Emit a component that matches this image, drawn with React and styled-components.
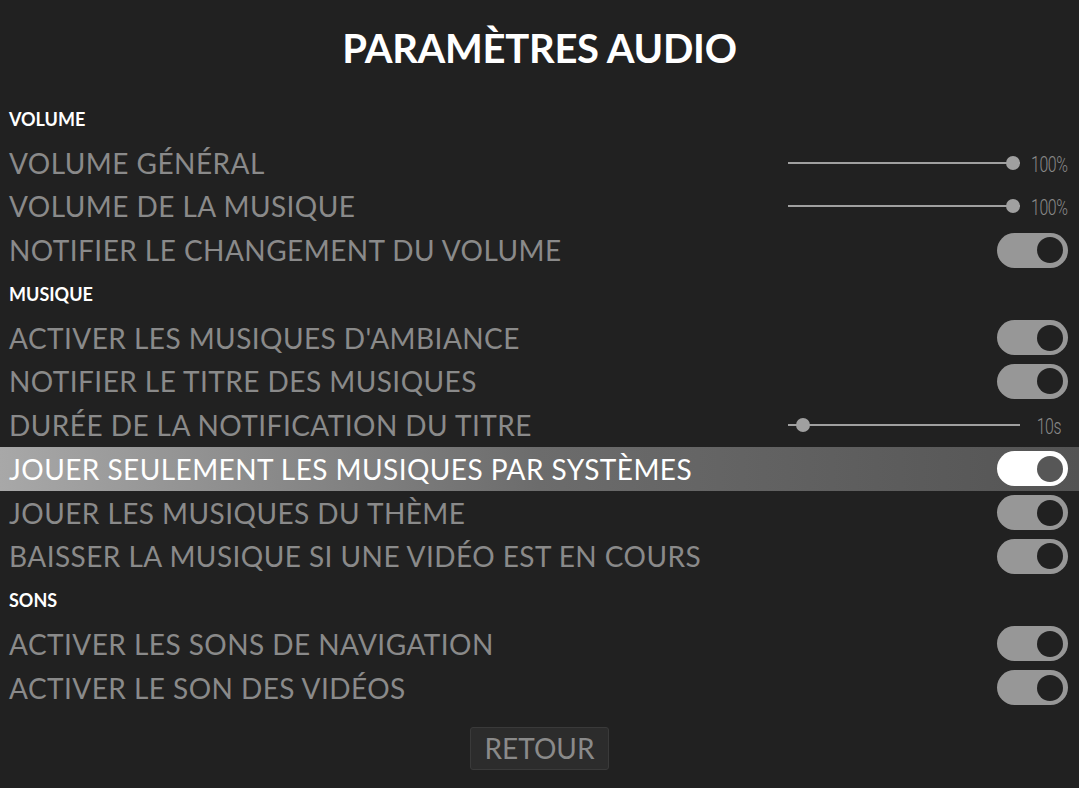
import React from 'react';
import styled, { createGlobalStyle } from 'styled-components';

const GlobalStyle = createGlobalStyle`
  html, body {
    margin: 0;
    padding: 0;
    background: #212121;
  }
  body {
    font-family: 'Lato', 'Open Sans', sans-serif;
  }
`;

const sections = [
  {
    title: 'VOLUME',
    items: [
      { label: 'VOLUME GÉNÉRAL', type: 'slider', value: 1, text: '100%' },
      { label: 'VOLUME DE LA MUSIQUE', type: 'slider', value: 1, text: '100%' },
      { label: 'NOTIFIER LE CHANGEMENT DU VOLUME', type: 'switch' },
    ],
  },
  {
    title: 'MUSIQUE',
    items: [
      { label: "ACTIVER LES MUSIQUES D'AMBIANCE", type: 'switch' },
      { label: 'NOTIFIER LE TITRE DES MUSIQUES', type: 'switch' },
      { label: 'DURÉE DE LA NOTIFICATION DU TITRE', type: 'slider', value: 0.035, text: '10s' },
      { label: 'JOUER SEULEMENT LES MUSIQUES PAR SYSTÈMES', type: 'switch', active: true },
      { label: 'JOUER LES MUSIQUES DU THÈME', type: 'switch' },
      { label: 'BAISSER LA MUSIQUE SI UNE VIDÉO EST EN COURS', type: 'switch' },
    ],
  },
  {
    title: 'SONS',
    items: [
      { label: 'ACTIVER LES SONS DE NAVIGATION', type: 'switch' },
      { label: 'ACTIVER LE SON DES VIDÉOS', type: 'switch' },
    ],
  },
];

const App = () => {
  return (
    <Screen>
      <GlobalStyle />
      <Title>PARAMÈTRES AUDIO</Title>
      <List>
        {sections.map((section) => (
          <React.Fragment key={section.title}>
            <SectionHeader>{section.title}</SectionHeader>
            {section.items.map((item) => (
              <Row key={item.label} $active={item.active}>
                <Label $active={item.active}>{item.label}</Label>
                {item.type === 'slider' ? (
                  <SliderWrap>
                    <Track>
                      <Knob style={{ left: `calc(${item.value} * (100% - 14px))` }} />
                    </Track>
                    <Value>
                      <ValueText>{item.text}</ValueText>
                    </Value>
                  </SliderWrap>
                ) : (
                  <Switch $active={item.active}>
                    <SwitchKnob $active={item.active} />
                  </Switch>
                )}
              </Row>
            ))}
          </React.Fragment>
        ))}
      </List>
      <Footer>
        <BackButton>RETOUR</BackButton>
      </Footer>
    </Screen>
  );
};

const Screen = styled.div`
  width: 1079px;
  height: 788px;
  background: #212121;
  overflow: hidden;
  display: flex;
  flex-direction: column;
`;

const Title = styled.h1`
  margin: 0;
  height: 95px;
  display: flex;
  align-items: center;
  justify-content: center;
  color: #ffffff;
  font-family: 'Lato', sans-serif;
  font-weight: 700;
  font-size: 40px;
  letter-spacing: -0.3px;
`;

const List = styled.div`
  display: flex;
  flex-direction: column;
  margin-top: 2px;
`;

const SectionHeader = styled.div`
  height: 43.75px;
  display: flex;
  align-items: center;
  padding-left: 9px;
  color: #ffffff;
  font-weight: 700;
  font-size: 18px;
`;

const Row = styled.div`
  height: 43.75px;
  display: flex;
  align-items: center;
  justify-content: space-between;
  padding: 0 11px 0 9px;
  background: ${(p) =>
    p.$active
      ? 'linear-gradient(to right, #a8a8a8 0%, #6c6c6c 50%, #545454 100%)'
      : 'transparent'};
`;

const Label = styled.span`
  color: ${(p) => (p.$active ? '#ffffff' : '#8a8a8a')};
  font-size: 28px;
  font-weight: 400;
  letter-spacing: 0.45px;
  white-space: nowrap;
`;

const SliderWrap = styled.div`
  width: 280px;
  display: flex;
  align-items: center;
`;

const Track = styled.div`
  position: relative;
  flex: 1;
  height: 2px;
  background: #a0a0a0;
`;

const Knob = styled.div`
  position: absolute;
  top: -6px;
  width: 14px;
  height: 14px;
  border-radius: 50%;
  background: #a0a0a0;
`;

const Value = styled.span`
  width: 38px;
  margin-left: 10px;
  display: flex;
  justify-content: center;
  white-space: nowrap;
  padding-top: 3px;
`;

const ValueText = styled.span`
  display: inline-block;
  color: #8a8a8a;
  font-family: 'Roboto', sans-serif;
  font-weight: 300;
  font-size: 22px;
  letter-spacing: -0.6px;
  transform: scaleX(0.72);
`;

const Switch = styled.div`
  width: 71px;
  height: 35px;
  box-sizing: border-box;
  border-radius: 18px;
  background: ${(p) => (p.$active ? '#ffffff' : '#979797')};
  display: flex;
  align-items: center;
  justify-content: flex-end;
  padding-right: 5px;
`;

const SwitchKnob = styled.div`
  width: 26px;
  height: 26px;
  border-radius: 50%;
  background: ${(p) => (p.$active ? '#575757' : '#212121')};
`;

const Footer = styled.div`
  display: flex;
  justify-content: center;
  padding-top: 17px;
`;

const BackButton = styled.button`
  width: 139px;
  height: 43px;
  background: #2c2c2c;
  border: 1px solid #3a3a3a;
  border-radius: 3px;
  color: #8a8a8a;
  font-family: 'Lato', sans-serif;
  font-size: 28px;
  padding: 0;
`;

export default App;
